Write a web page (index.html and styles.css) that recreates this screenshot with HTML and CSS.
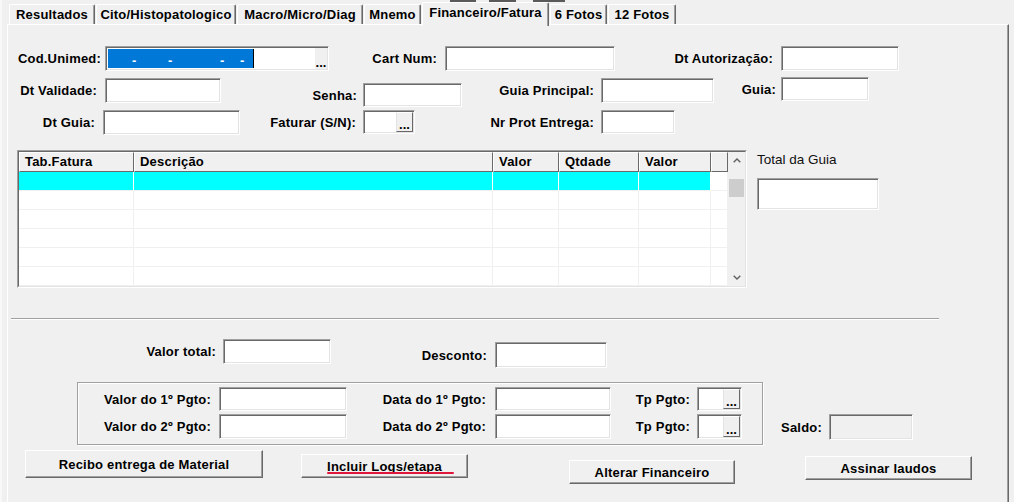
FILE: index.html
```html
<!DOCTYPE html>
<html>
<head>
<meta charset="utf-8">
<link rel="stylesheet" href="styles.css">
</head>
<body>
<div class="app">
  <div class="topbits"><span class="bit b1"></span><span class="bit b2"></span><span class="bit b3"></span></div>
  <div class="tabs">
    <div class="tab t1">Resultados</div>
    <div class="tab t2">Cito/Histopatologico</div>
    <div class="tab t3">Macro/Micro/Diag</div>
    <div class="tab t4">Mnemo</div>
    <div class="tab t5 active">Financeiro/Fatura</div>
    <div class="tab t6">6 Fotos</div>
    <div class="tab t7">12 Fotos</div>
  </div>
  <div class="panel">
    <div class="row r1">
      <div class="fld f-cod">
        <span class="lbl">Cod.Unimed:</span>
        <span class="inp inp-cod">
          <span class="sel"><span class="dash d1">-</span><span class="dash d2">-</span><span class="dash d3">-</span><span class="dash d4">-</span></span>
          <span class="caret"></span>
          <span class="dots-flat">...</span>
        </span>
      </div>
      <div class="fld f-cart"><span class="lbl">Cart Num:</span><span class="inp"></span></div>
      <div class="fld f-aut"><span class="lbl">Dt Autorização:</span><span class="inp"></span></div>
    </div>

    <div class="row r2">
      <div class="fld f-val"><span class="lbl">Dt Validade:</span><span class="inp"></span></div>
      <div class="fld f-senha"><span class="lbl">Senha:</span><span class="inp"></span></div>
      <div class="fld f-gp"><span class="lbl">Guia Principal:</span><span class="inp"></span></div>
      <div class="fld f-guia"><span class="lbl">Guia:</span><span class="inp"></span></div>
    </div>

    <div class="row r3">
      <div class="fld f-dtg"><span class="lbl">Dt Guia:</span><span class="inp"></span></div>
      <div class="fld f-fat"><span class="lbl">Faturar (S/N):</span><span class="inp"><span class="dots">...</span></span></div>
      <div class="fld f-nr"><span class="lbl">Nr Prot Entrega:</span><span class="inp"></span></div>
    </div>

    <div class="row r4">
      <div class="grid">
        <div class="grid-in">
          <div class="cells">
            <div class="hc">Tab.Fatura</div>
            <div class="hc">Descrição</div>
            <div class="hc">Valor</div>
            <div class="hc">Qtdade</div>
            <div class="hc">Valor</div>
            <div class="hc"></div>

            <div class="c cy"></div><div class="c cy"></div><div class="c cy"></div><div class="c cy"></div><div class="c cy"></div><div class="c"></div>
            <div class="c"></div><div class="c"></div><div class="c"></div><div class="c"></div><div class="c"></div><div class="c"></div>
            <div class="c"></div><div class="c"></div><div class="c"></div><div class="c"></div><div class="c"></div><div class="c"></div>
            <div class="c"></div><div class="c"></div><div class="c"></div><div class="c"></div><div class="c"></div><div class="c"></div>
            <div class="c"></div><div class="c"></div><div class="c"></div><div class="c"></div><div class="c"></div><div class="c"></div>
            <div class="c"></div><div class="c"></div><div class="c"></div><div class="c"></div><div class="c"></div><div class="c"></div>
          </div>
          <div class="scroll">
            <div class="arrow"><svg width="8" height="5" viewBox="0 0 8 5"><polyline points="0.7,4.3 4,1 7.3,4.3" fill="none" stroke="#606060" stroke-width="1.4"/></svg></div>
            <div class="thumb"></div>
            <div class="spacer"></div>
            <div class="arrow"><svg width="8" height="5" viewBox="0 0 8 5"><polyline points="0.7,0.7 4,4 7.3,0.7" fill="none" stroke="#606060" stroke-width="1.4"/></svg></div>
          </div>
        </div>
      </div>
      <div class="total">
        <div class="total-lbl">Total da Guia</div>
        <span class="inp"></span>
      </div>
    </div>

    <div class="divider"></div>

    <div class="row r5">
      <div class="fld f-vt"><span class="lbl">Valor total:</span><span class="inp"></span></div>
      <div class="fld f-desc"><span class="lbl">Desconto:</span><span class="inp"></span></div>
    </div>

    <div class="row r6">
      <div class="group">
        <div class="grow ga">
          <div class="fld g-v"><span class="lbl">Valor do 1º Pgto:</span><span class="inp"></span></div>
          <div class="fld g-d"><span class="lbl">Data do 1º Pgto:</span><span class="inp"></span></div>
          <div class="fld g-tp"><span class="lbl">Tp Pgto:</span><span class="inp"><span class="dots">...</span></span></div>
        </div>
        <div class="grow gb">
          <div class="fld g-v"><span class="lbl">Valor do 2º Pgto:</span><span class="inp"></span></div>
          <div class="fld g-d"><span class="lbl">Data do 2º Pgto:</span><span class="inp"></span></div>
          <div class="fld g-tp"><span class="lbl">Tp Pgto:</span><span class="inp"><span class="dots">...</span></span></div>
        </div>
      </div>
      <div class="fld f-saldo"><span class="lbl">Saldo:</span><span class="inp inp-dis"></span></div>
    </div>

    <div class="row r7">
      <div class="btn b-rec">Recibo entrega de Material</div>
      <div class="btn b-inc">Incluir Logs/etapa</div>
      <div class="btn b-alt">Alterar Financeiro</div>
      <div class="btn b-ass">Assinar laudos</div>
    </div>
  </div>
</div>
</body>
</html>
```
FILE: styles.css
```css
* { box-sizing: border-box; margin: 0; padding: 0; }
body {
  background: #f0f0f0;
  font: bold 13px "Liberation Sans", Arial, sans-serif;
  letter-spacing: 0.2px;
  color: #000;
  width: 1014px;
  height: 502px;
  overflow: hidden;
}
.app { border-left: 2px solid #f8f8f8; height: 502px; }

.topbits { display: flex; height: 2px; }
.bit { flex: none; height: 2px; background: #5a5a5a; }
.b1 { margin-left: 448px; width: 26px; }
.b2 { margin-left: 13px; width: 27px; }
.b3 { margin-left: 17px; width: 32px; }

.tabs {
  display: flex;
  align-items: flex-start;
  height: 22px;
  margin-left: 7px;
  position: relative;
  z-index: 1;
}
.tab {
  flex: none;
  height: 20px;
  margin-top: 2px;
  margin-right: 1px;
  background: #f0f0f0;
  border-top: 1px solid #fff;
  border-left: 1px solid #fff;
  border-right: 1px solid #696969;
  box-shadow: inset -1px 0 #a0a0a0;
  border-radius: 2px 2px 0 0;
  text-align: center;
  line-height: 19px;
  white-space: nowrap;
}
.tab.active { height: 24px; margin-top: 0; line-height: 20px; }
.t1 { width: 86px; }
.t2 { width: 140px; }
.t3 { width: 126px; }
.t4 { width: 57px; }
.t5 { width: 127px; }
.t6 { width: 57px; }
.t7 { width: 68px; }

.panel {
  margin-left: 5px;
  width: 1002px;
  height: 478px;
  border-top: 1px solid #fff;
  border-left: 1px solid #fff;
  border-right: 1px solid #696969;
  box-shadow: inset -1px 0 #a0a0a0;
}

.row { display: flex; align-items: flex-start; }
.fld { display: flex; align-items: center; flex: none; }
.lbl { flex: none; text-align: right; white-space: nowrap; }
.inp {
  flex: none;
  display: flex;
  justify-content: flex-end;
  background: #fff;
  border: 1px solid;
  border-color: #a0a0a0 #fff #fff #a0a0a0;
  box-shadow: inset 1px 1px #696969, inset -1px -1px #e3e3e3;
  padding: 1px;
}
.inp-dis { background: #f0f0f0; }

/* row 1 */
.r1 { margin-top: 21px; }
.f-cod { margin-left: 3px; }
.f-cod .lbl { width: 90px; margin-right: 4px; }
.f-cod .inp { width: 224px; height: 25px; }
.inp-cod { justify-content: flex-start; align-items: flex-start; }
.sel {
  display: flex;
  align-items: center;
  width: 145px;
  height: 19px;
  margin: 1px 0 0 1px;
  padding-top: 3px;
  background: #0078d7;
  color: #fff;
}
.dash { flex: none; width: 4px; overflow: visible; }
.d1 { margin-left: 24px; }
.d2 { margin-left: 32px; }
.d3 { margin-left: 48px; }
.d4 { margin-left: 16px; }
.caret { width: 1px; height: 19px; margin-top: 1px; background: #000; }
.dots-flat {
  margin-left: auto;
  width: 13px;
  height: 100%;
  background: #f0f0f0;
  border-left: 1px solid #fff;
  display: flex;
  align-items: flex-end;
  justify-content: center;
  line-height: 12px;
  letter-spacing: 0;
}
.dots {
  width: 17px;
  height: 100%;
  background: #f0f0f0;
  border-top: 1px solid #fff;
  border-left: 1px solid #e3e3e3;
  border-right: 1px solid #696969;
  border-bottom: 1px solid #696969;
  display: flex;
  align-items: flex-end;
  justify-content: center;
  line-height: 13px;
  letter-spacing: 0;
}
.f-cart { margin-left: 8px; }
.f-cart .lbl { width: 100px; margin-right: 8px; }
.f-cart .inp { width: 170px; height: 25px; }
.f-aut { margin-left: 38px; }
.f-aut .lbl { width: 120px; margin-right: 8px; }
.f-aut .inp { width: 118px; height: 25px; }

/* row 2 */
.r2 { margin-top: 6px; }
.f-val { margin: 1px 0 0 3px; }
.f-val .lbl { width: 86px; margin-right: 8px; }
.f-val .inp { width: 116px; height: 25px; }
.f-senha { margin: 6px 0 0 76px; }
.f-senha .lbl { width: 60px; margin-right: 6px; }
.f-senha .inp { width: 99px; height: 24px; }
.f-gp { margin: 1px 0 0 22px; }
.f-gp .lbl { width: 110px; margin-right: 7px; }
.f-gp .inp { width: 113px; height: 25px; }
.f-guia { margin-left: 12px; }
.f-guia .lbl { width: 50px; margin-right: 5px; }
.f-guia .inp { width: 88px; height: 24px; }

/* row 3 */
.r3 { margin-top: 3px; }
.f-dtg { margin-left: 3px; }
.f-dtg .lbl { width: 84px; margin-right: 8px; }
.f-dtg .inp { width: 137px; height: 25px; }
.f-fat { margin-left: 16px; }
.f-fat .lbl { width: 100px; margin-right: 7px; }
.f-fat .inp { width: 52px; height: 24px; }
.f-nr { margin-left: 59px; }
.f-nr .lbl { width: 120px; margin-right: 7px; }
.f-nr .inp { width: 74px; height: 24px; }

/* grid */
.r4 { margin-top: 15px; }
.grid {
  flex: none;
  margin-left: 9px;
  width: 730px;
  height: 138px;
  border: 1px solid;
  border-color: #a0a0a0 #fff #fff #a0a0a0;
}
.grid-in {
  height: 100%;
  display: flex;
  background: #fff;
  border: 1px solid;
  border-color: #696969 #e3e3e3 #e3e3e3 #696969;
}
.cells {
  flex: none;
  display: grid;
  grid-template-columns: 115px 359px 66px 80px 72px 17px;
  grid-template-rows: 20px repeat(6, 19px);
}
.hc {
  background: #f0f0f0;
  border-top: 1px solid #fff;
  border-left: 1px solid #fff;
  border-right: 1px solid #696969;
  border-bottom: 1px solid #696969;
  padding-left: 5px;
  line-height: 18px;
  white-space: nowrap;
}
.c {
  border-right: 1px solid #f0f0f0;
  border-bottom: 1px solid #f0f0f0;
}
.c.cy { background: #00ffff; border-right-color: #fff; }
.scroll {
  flex: none;
  width: 17px;
  background: #f0f0f0;
  display: flex;
  flex-direction: column;
}
.arrow { height: 17px; display: flex; align-items: center; justify-content: center; }
.thumb { margin: 10px 0 0 1px; width: 15px; height: 18px; background: #cdcdcd; }
.spacer { flex: 1; }

.total { margin-left: 10px; display: flex; flex-direction: column; }
.total-lbl {
  font-weight: normal;
  font-size: 13.5px;
  letter-spacing: 0;
  line-height: 20px;
  height: 28px;
  color: #111;
}
.total .inp { width: 122px; height: 32px; }

.divider {
  margin: 30px 0 0 3px;
  width: 928px;
  height: 2px;
  border-top: 1px solid #a0a0a0;
  border-bottom: 1px solid #fff;
}

/* valor total row */
.r5 { margin-top: 19px; }
.f-vt { margin-left: 3px; }
.f-vt .lbl { width: 205px; margin-right: 7px; }
.f-vt .inp { width: 108px; height: 25px; }
.f-desc { margin: 3px 0 0 56px; }
.f-desc .lbl { width: 100px; margin-right: 8px; }
.f-desc .inp { width: 112px; height: 26px; }

/* group */
.r6 { margin-top: 14px; }
.group {
  flex: none;
  margin-left: 69px;
  width: 686px;
  height: 63px;
  border: 1px solid #a0a0a0;
  box-shadow: inset 1px 1px #fff, 1px 1px #fff;
  padding-top: 4px;
}
.grow { display: flex; align-items: flex-start; }
.gb { margin-top: 3px; }
.g-v .lbl { width: 133px; margin-right: 8px; }
.g-v .inp { width: 128px; height: 24px; }
.g-d { margin-left: 19px; }
.g-d .lbl { width: 120px; margin-right: 9px; }
.g-d .inp { width: 116px; height: 24px; }
.g-tp { margin-left: 19px; }
.g-tp .lbl { width: 60px; margin-right: 7px; }
.g-tp .inp { width: 45px; height: 24px; }
.gb .inp { height: 25px; }
.f-saldo { margin: 32px 0 0 18px; }
.f-saldo .lbl { width: 41px; margin-right: 7px; }
.f-saldo .inp { width: 84px; height: 26px; }

/* buttons */
.r7 { margin-top: 5px; }
.btn {
  flex: none;
  position: relative;
  background: #f0f0f0;
  border: 1px solid;
  border-color: #fff #696969 #696969 #fff;
  box-shadow: inset -1px -1px #a0a0a0;
  display: flex;
  align-items: center;
  justify-content: center;
  white-space: nowrap;
}
.b-rec { margin-left: 17px; width: 238px; height: 28px; }
.b-inc { margin: 4px 0 0 38px; width: 167px; height: 24px; }
.b-alt { margin: 10px 0 0 101px; width: 166px; height: 24px; }
.b-ass { margin: 6px 0 0 70px; width: 167px; height: 24px; }
.b-inc::after {
  content: "";
  position: absolute;
  left: 25px;
  top: 17px;
  width: 127px;
  height: 2px;
  background: #e0173a;
  border-radius: 1px;
}
```
